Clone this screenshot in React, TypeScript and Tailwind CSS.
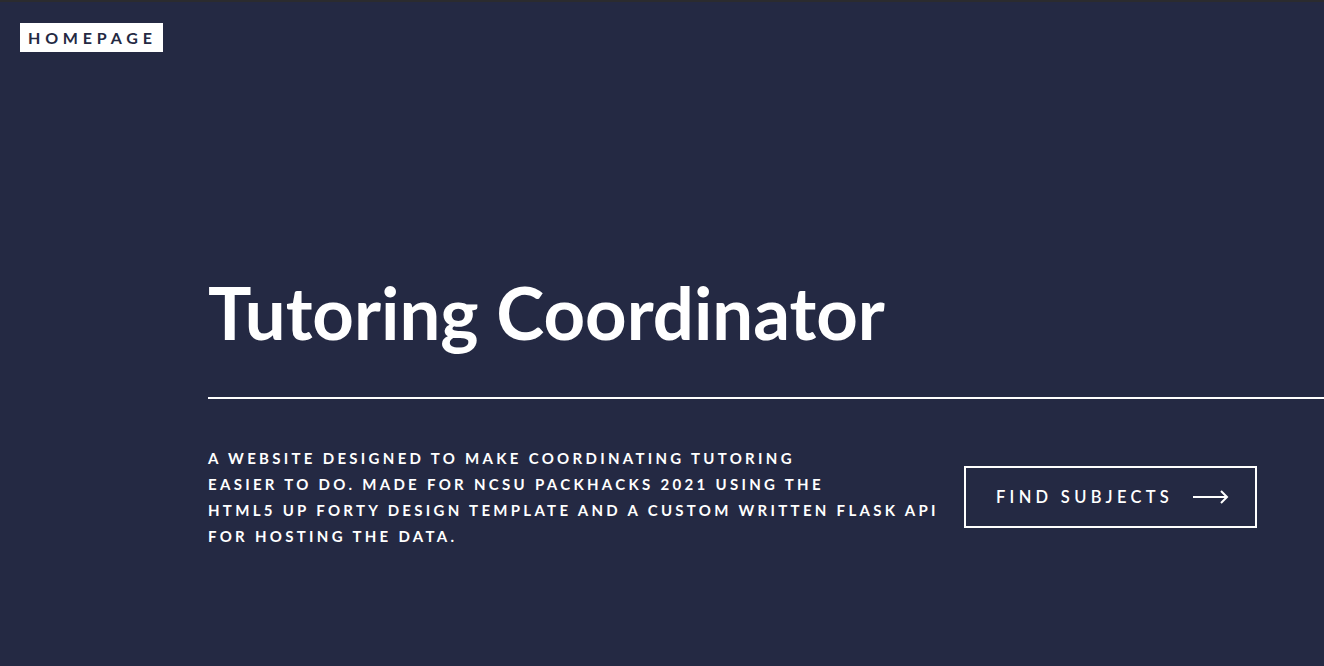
const font = { fontFamily: "Lato, 'Open Sans', sans-serif" };

function ArrowRight() {
  return (
    <svg width="36" height="14" viewBox="0 0 36 14" fill="none" stroke="white" strokeWidth="2">
      <path d="M0 7h34" />
      <path d="M28 1l6 6-6 6" />
    </svg>
  );
}

export default function App() {
  return (
    <div className="min-h-[666px] bg-[#242943] text-white" style={font}>
      <div className="h-[2px] bg-[#2b2b2f]" />
      <header className="px-[20px] pt-[21px]">
        <a
          href="#"
          className="inline-flex h-[29px] items-center bg-white pl-[8px] pr-[6px] text-[16px] font-bold uppercase tracking-[0.3em] text-[#242943]"
        >
          Homepage
        </a>
      </header>

      <section className="pl-[208px] pt-[223px]">
        <h1 className="text-[72.5px] leading-[73px] font-bold">Tutoring Coordinator</h1>
        <div className="mt-[49px] h-[2px] bg-white" />
        <div className="mt-[46px] flex items-center">
          <p className="w-[756px] text-[15px] leading-[26px] font-bold uppercase tracking-[0.22em]">
            A website designed to make coordinating tutoring
            <br />
            easier to do. Made for NCSU PackHacks 2021 using the
            <br />
            HTML5 UP Forty design template and a custom written Flask API
            <br />
            for hosting the data.
          </p>
          <a
            href="#"
            className="flex h-[62px] w-[293px] items-center gap-[20px] border-2 border-white pl-[30px] text-[16.5px] font-semibold uppercase tracking-[0.26em]"
          >
            Find Subjects
            <ArrowRight />
          </a>
        </div>
      </section>
    </div>
  );
}
